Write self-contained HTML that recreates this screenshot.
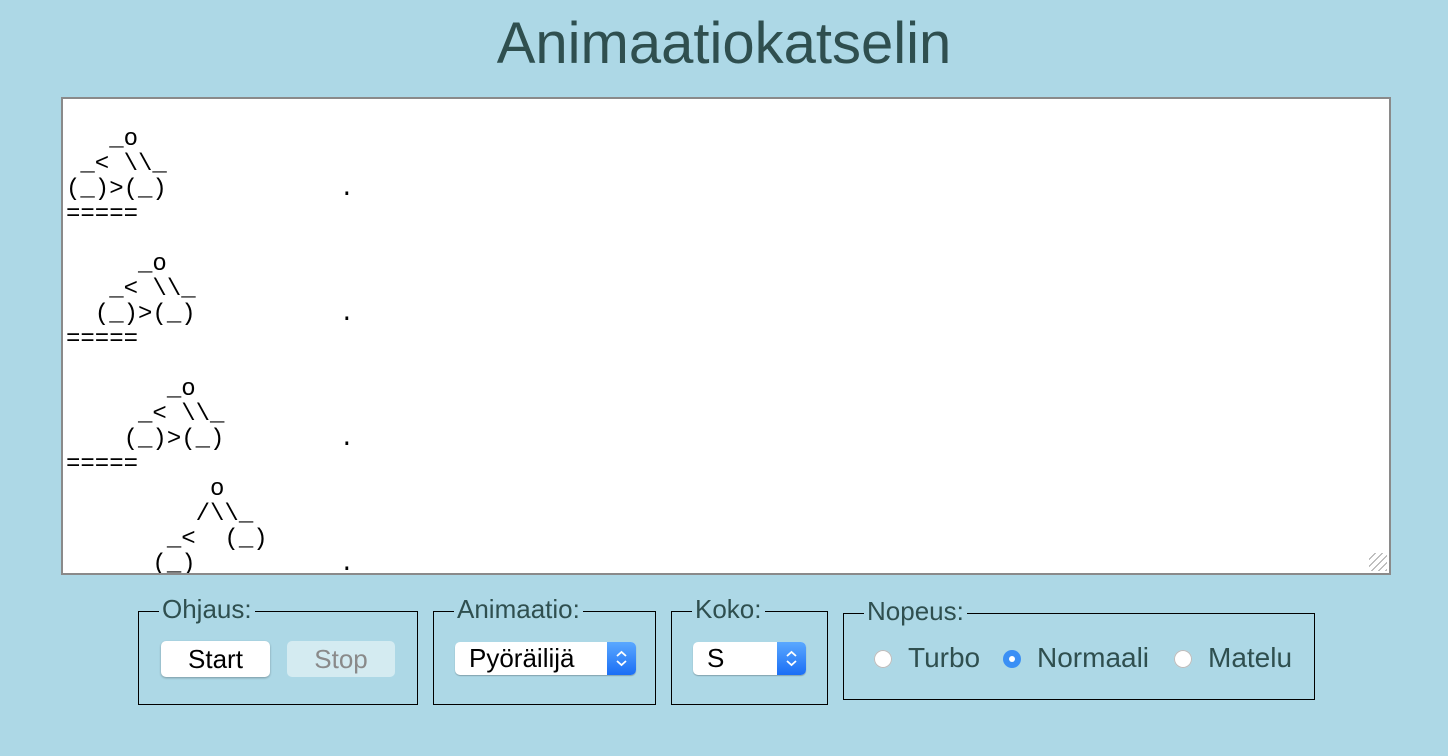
<!DOCTYPE html>
<html><head><meta charset="utf-8"><style>
body{margin:0;width:1448px;height:756px;background:#add8e6;font-family:"Liberation Sans",sans-serif;color:#2f4f4f;position:relative;overflow:hidden}
h1{position:absolute;left:0;width:1448px;top:12px;margin:0;text-align:center;font-weight:normal;font-size:58px;line-height:64px}
.ta{position:absolute;left:61px;top:97px;width:1326px;height:474px;border:2px solid #8a8a8a;background:#fff;overflow:hidden}
.ta pre{margin:0;position:absolute;left:3px;top:3px;font-family:"Liberation Mono",monospace;font-size:24px;line-height:25px;color:#000}
.grip{position:absolute;right:2px;bottom:2px;width:18px;height:18px;background:repeating-linear-gradient(135deg,transparent 0 4px,#aaa 4px 5px)}
.fs{position:absolute;border:1px solid #000}
.lg{position:absolute;top:-18px;left:20px;background:#add8e6;padding:0 3px;font-size:26px;line-height:30px}
.btn{position:absolute;height:36px;border-radius:5px;font-size:26px;line-height:36px;text-align:center}
.sel{position:absolute;height:33px;border-radius:5px;background:#fff;box-shadow:0 1px 1px rgba(0,0,0,.25);font-size:26px;line-height:33px;color:#000;overflow:hidden}
.sel span{padding-left:14px}
.sel i{position:absolute;right:0;top:0;width:29px;height:33px;background:linear-gradient(#5aa8ff,#1a6ef5);color:#fff;font-style:normal}
.r{position:absolute;width:18px;height:18px;border-radius:50%;background:#fff;box-shadow:0 0 0 1px #bbb inset}
.rt{position:absolute;font-size:28px;line-height:30px}
</style></head><body>
<h1>Animaatiokatselin</h1>
<div class="ta"><pre>

   _o
 _&lt; \\_
(_)&gt;(_)            .
=====

     _o
   _&lt; \\_
  (_)&gt;(_)          .
=====

       _o
     _&lt; \\_
    (_)&gt;(_)        .
=====
          o
         /\\_
       _&lt;  (_)
      (_)          .
</pre><div class="grip"></div></div>

<div class="fs" style="left:138px;top:611px;width:278px;height:92px"><div class="lg">Ohjaus:</div></div>
<div class="btn" style="left:161px;top:641px;width:109px;background:#fff;color:#000;box-shadow:0 1px 2px rgba(0,0,0,.3)">Start</div>
<div class="btn" style="left:287px;top:641px;width:108px;background:#d4ebf1;color:#8a8a8a">Stop</div>

<div class="fs" style="left:433px;top:611px;width:221px;height:92px"><div class="lg">Animaatio:</div></div>
<div class="sel" style="left:455px;top:642px;width:181px"><span>Pyöräilijä</span><i><svg width="29" height="33"><path d="M10 14l4.5-4 4.5 4M10 19l4.5 4 4.5-4" stroke="#fff" stroke-width="1.8" fill="none"/></svg></i></div>

<div class="fs" style="left:671px;top:611px;width:155px;height:92px"><div class="lg">Koko:</div></div>
<div class="sel" style="left:693px;top:642px;width:113px"><span>S</span><i><svg width="29" height="33"><path d="M10 14l4.5-4 4.5 4M10 19l4.5 4 4.5-4" stroke="#fff" stroke-width="1.8" fill="none"/></svg></i></div>

<div class="fs" style="left:843px;top:613px;width:470px;height:85px"><div class="lg">Nopeus:</div></div>
<div class="r" style="left:874px;top:650px"></div><div class="rt" style="left:908px;top:643px">Turbo</div>
<div class="r" style="left:1003px;top:650px;background:#3a8ff5;box-shadow:none"><div style="position:absolute;left:6px;top:6px;width:6px;height:6px;border-radius:50%;background:#fff"></div></div><div class="rt" style="left:1037px;top:643px">Normaali</div>
<div class="r" style="left:1174px;top:650px"></div><div class="rt" style="left:1208px;top:643px">Matelu</div>
</body></html>
